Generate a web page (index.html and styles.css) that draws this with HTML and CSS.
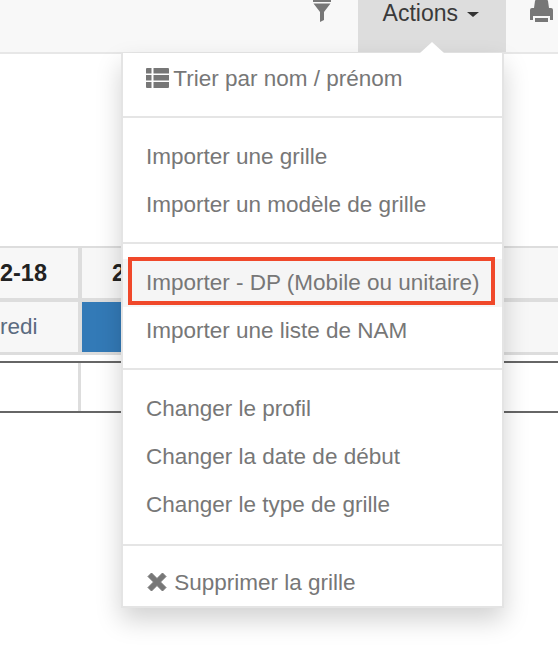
FILE: index.html
```html
<!doctype html>
<html lang="fr">
    <head>
        <meta charset="UTF-8" />
        <meta name="viewport" content="width=device-width, initial-scale=1.0" />
        <title>Actions</title>
        <link rel="stylesheet" href="styles.css">
    </head>
    <body>
        <div class="navbar">
            <svg class="nav-filter" width="20" height="22" viewBox="0 0 20 22">
                <path fill="#777" d="M1 0h18v2H1z M1.500 3.500h17L12 12v8l-4 2V12z" />
            </svg>
            <div class="nav-actions">Actions <span class="caret"></span></div>
            <div class="nav-print">
                <svg width="24" height="22" viewBox="0 0 24 22">
                    <path fill="#777" d="M6 0h11a1 1 0 0 1 1 1l1 7H4l1-7a1 1 0 0 1 1-1z M0 10a2 2 0 0 1 2-2h19a2 2 0 0 1 2 2v10h-3v-4H3v4H0z M5 18h13v4H5z" />
                </svg>
            </div>
        </div>

        <div class="grid-wrap">
            <div class="grid-row head-row">
                <div class="cell date-cell">2-18</div>
                <div class="cell date-cell next-date">2</div>
            </div>
            <div class="grid-row day-row">
                <div class="cell day-cell">redi</div>
                <div class="cell blue-cell"></div>
            </div>
            <div class="grid-row empty-row">
                <div class="cell empty-cell"></div>
                <div class="cell empty-cell"></div>
            </div>
        </div>

        <div class="menu">
            <span class="menu-arrow"></span>
            <a class="menu-item">
                <svg class="icon icon-list" width="23" height="20" viewBox="0 0 23 20">
                    <path fill="#777" d="M0 1a1 1 0 0 1 1-1h4.500v5.500H0z M0 7h5.500v5.500H0z M0 14h5.500v6H1a1 1 0 0 1-1-1z M7.500 0H22a1 1 0 0 1 1 1v4.500H7.500z M7.500 7H23v5.500H7.500z M7.500 14H23v5a1 1 0 0 1-1 1H7.500z" />
                </svg>
                Trier par nom / prénom
            </a>
            <div class="divider"></div>
            <a class="menu-item">Importer une grille</a>
            <a class="menu-item">Importer un modèle de grille</a>
            <div class="divider"></div>
            <a class="menu-item active">Importer - DP (Mobile ou unitaire)<span class="red-box"></span></a>
            <a class="menu-item">Importer une liste de NAM</a>
            <div class="divider"></div>
            <a class="menu-item">Changer le profil</a>
            <a class="menu-item">Changer la date de début</a>
            <a class="menu-item">Changer le type de grille</a>
            <div class="divider divider-last"></div>
            <a class="menu-item">
                <svg class="icon icon-x" width="20" height="20" viewBox="0 0 20 20">
                    <path fill="#777" d="M4.500 1 10 6.500 15.500 1 19 4.500 13.500 10 19 15.500 15.500 19 10 13.500 4.500 19 1 15.500 6.500 10 1 4.500z" stroke="#777" stroke-linejoin="round" />
                </svg>
                Supprimer la grille
            </a>
        </div>
    </body>
</html>
```
FILE: styles.css
```css
html, body {
    height: 100%;
    overflow: hidden;
}
body {
    margin: 0;
    font-family: "Liberation Sans", Arial, sans-serif;
    font-size: 22.5px;
    color: #333;
    background-color: #fff;
    position: relative;
}
/* Barre du haut */
.navbar {
    display: flex;
    height: 52px;
    background-color: #f8f8f8;
    border-bottom: 2px solid #e7e7e7;
}
.nav-filter {
    margin-left: 312px;
    margin-right: 26px;
    flex: none;
}
.nav-actions {
    width: 148px;
    box-sizing: border-box;
    padding-right: 2px;
    flex: none;
    text-align: center;
    font-size: 23px;
    line-height: 26px;
    height: 52px;
    background-color: #ddd;
    color: #3a3a3a;
}
.nav-print {
    padding-left: 24px;
}
.nav-print svg {
    display: block;
}
.caret {
    display: inline-block;
    border-top: 5px solid #333;
    border-left: 6px solid transparent;
    border-right: 6px solid transparent;
    vertical-align: middle;
    margin-left: 3px;
}
/* Grille derriere le menu */
.grid-wrap {
    margin-top: 192px;
}
.grid-row {
    display: grid;
    grid-template-columns: 82px 1fr;
}
.cell {
    box-sizing: border-box;
}
.head-row {
    border-top: 2px solid #ddd;
}
.date-cell {
    display: flex;
    justify-content: flex-end;
    height: 50px;
    line-height: 50px;
    white-space: nowrap;
    font-size: 23.5px;
    font-weight: bold;
    background-color: #f7f7f7;
    padding-right: 31px;
    color: #222;
    border-right: 4px solid #ddd;
}
.next-date {
    justify-content: flex-start;
    padding-left: 30px;
    border-right: 0;
}
.day-row {
    border-top: 4px solid #ddd;
    border-bottom: 3px solid #ddd;
}
.day-cell {
    height: 50px;
    line-height: 50px;
    background-color: #f7f7f7;
    color: #5b6b80;
    border-right: 4px solid #ddd;
    white-space: nowrap;
    overflow: hidden;
}
.blue-cell {
    height: 50px;
    background: linear-gradient(#337ab7 0 100%) no-repeat left / 60px 100%, #f7f7f7;
}
.empty-row {
    margin-top: 6px;
    border-top: 2px solid #666;
    border-bottom: 2px solid #666;
}
.empty-cell {
    height: 48px;
}
.empty-cell:first-child {
    border-right: 3px solid #ddd;
    margin-right: 1px;
}
/* Menu deroulant */
.menu {
    position: absolute;
    top: 53px;
    left: 121px;
    width: 383px;
    height: 555px;
    box-sizing: border-box;
    padding-top: 2px;
    background-color: #fff;
    border: 2px solid #e4e4e4;
    border-top: 0;
    box-shadow: 0 12px 24px rgba(0, 0, 0, 0.18);
}
.menu-arrow {
    position: absolute;
    top: -11px;
    left: 297px;
    border-bottom: 11px solid #fff;
    border-left: 12px solid transparent;
    border-right: 12px solid transparent;
}
.menu-item {
    display: block;
    position: relative;
    height: 48px;
    line-height: 48px;
    padding-left: 23px;
    color: #777;
    white-space: nowrap;
}
.icon {
    vertical-align: -2px;
}
.icon-list {
    margin-right: -1.5px;
}
.icon-x {
    margin-left: 1px;
    margin-right: 1px;
}
.active {
    background-color: #f5f5f5;
}
.red-box {
    position: absolute;
    top: -2px;
    left: 5px;
    width: 367px;
    height: 48px;
    box-sizing: border-box;
    border: 4px solid #f0482a;
}
.divider {
    height: 2px;
    margin: 13px 0 15px;
    background-color: #e5e5e5;
}
.divider-last {
    margin: 15px 0 13px;
}
```
